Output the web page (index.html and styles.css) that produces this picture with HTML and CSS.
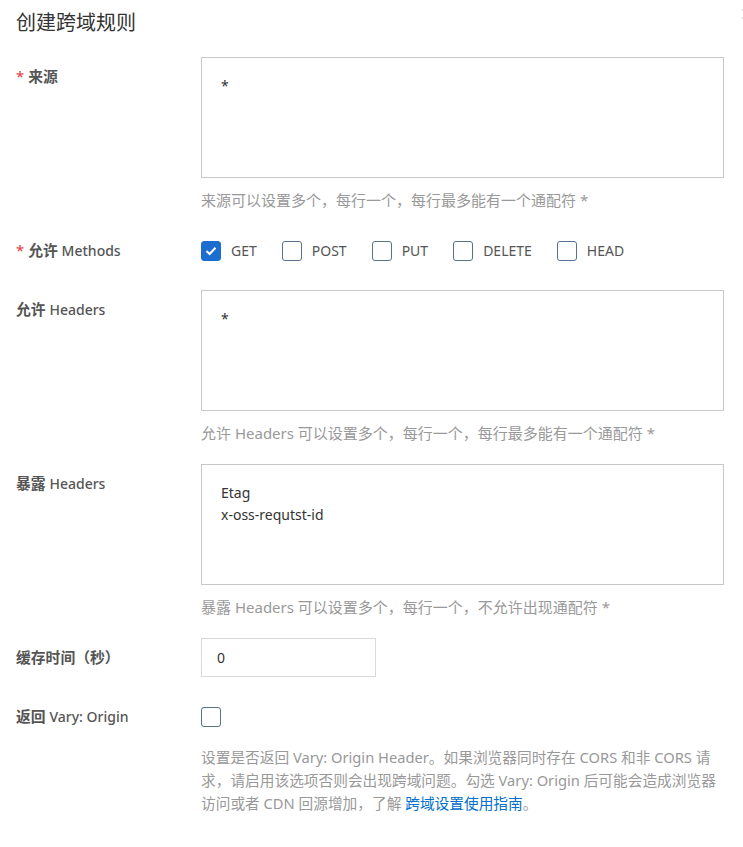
FILE: index.html
```html
<!DOCTYPE html>
<html lang="zh-CN">
<head>
    <meta charset="UTF-8">
    <meta name="viewport" content="width=device-width, initial-scale=1.0">
    <title>创建跨域规则</title>
    <link rel="stylesheet" href="styles.css">
</head>
<body>
    <div class="panel">
        <button class="close" type="button" aria-label="关闭">
            <svg width="10" height="10" viewBox="0 0 10 10"><path d="M0.5 0.5 L9.5 9.5 M9.5 0.5 L0.5 9.5" stroke="#999" stroke-width="1.2" fill="none"/></svg>
        </button>
        <h2 class="title">创建跨域规则</h2>

        <div class="form-item">
            <label class="form-label required">来源</label>
            <div class="form-control">
                <div class="textarea">*</div>
                <div class="help">来源可以设置多个，每行一个，每行最多能有一个通配符 *</div>
            </div>
        </div>

        <div class="form-item">
            <label class="form-label required">允许 <span class="en">Methods</span></label>
            <div class="form-control">
                <div class="check-group">
                    <label class="check"><span class="box checked"><svg width="12" height="10" viewBox="0 0 12 10"><path d="M1.5 5 L4.6 8 L10.5 1.8" stroke="#fff" stroke-width="2" fill="none"/></svg></span>GET</label>
                    <label class="check"><span class="box"></span>POST</label>
                    <label class="check"><span class="box"></span>PUT</label>
                    <label class="check"><span class="box"></span>DELETE</label>
                    <label class="check"><span class="box"></span>HEAD</label>
                </div>
            </div>
        </div>

        <div class="form-item">
            <label class="form-label">允许 <span class="en">Headers</span></label>
            <div class="form-control">
                <div class="textarea">*</div>
                <div class="help">允许 Headers 可以设置多个，每行一个，每行最多能有一个通配符 *</div>
            </div>
        </div>

        <div class="form-item">
            <label class="form-label">暴露 <span class="en">Headers</span></label>
            <div class="form-control">
                <div class="textarea">Etag<br>x-oss-requtst-id</div>
                <div class="help">暴露 Headers 可以设置多个，每行一个，不允许出现通配符 *</div>
            </div>
        </div>

        <div class="form-item">
            <label class="form-label">缓存时间（秒）</label>
            <div class="form-control">
                <div class="input">0</div>
            </div>
        </div>

        <div class="form-item">
            <label class="form-label">返回 <span class="en">Vary: Origin</span></label>
            <div class="form-control">
                <div class="check-group">
                    <label class="check"><span class="box"></span></label>
                </div>
                <p class="help desc">设置是否返回 Vary: Origin Header。如果浏览器同时存在 CORS 和非 CORS 请求，请启用该选项否则会出现跨域问题。勾选 Vary: Origin 后可能会造成浏览器访问或者 CDN 回源增加，了解 <a href="#">跨域设置使用指南</a>。</p>
            </div>
        </div>
    </div>
</body>
</html>
```

FILE: styles.css
```css
body {
    margin: 0;
    background-color: #fff;
    font-family: "Noto Sans", "Noto Sans CJK SC", sans-serif;
    font-size: 14px;
    color: #333;
}

.panel {
    position: relative;
    width: 743px;
    padding: 11px 16px 20px;
    box-sizing: border-box;
    overflow: hidden;
}

.close {
    position: absolute;
    top: 9px;
    right: -9px;
    padding: 0;
    border: none;
    background: none;
    line-height: 0;
}

.title {
    margin: 0 0 22px;
    font-size: 20px;
    line-height: 24px;
    font-weight: normal;
    color: #333;
}

.form-item {
    display: grid;
    grid-template-columns: 185px 523px;
    margin-bottom: 20px;
}

.form-label {
    padding-top: 8px;
    line-height: 22px;
    font-weight: bold;
    font-size: 14.8px;
    color: #555;
}

.form-label .en {
    font-weight: 500;
    font-size: 14px;
}

.form-label.required::before {
    content: "*";
    color: #e0393e;
    margin-right: 4px;
    font-weight: normal;
}

.textarea {
    height: 121px;
    box-sizing: border-box;
    padding: 17px 19px;
    border: 1px solid #c8c8c8;
    line-height: 22px;
    color: #333;
}

.help {
    margin-top: 11px;
    font-size: 15px;
    line-height: 22px;
    color: #999;
}

.help.desc {
    margin: 10px 0 0;
    font-size: 14.7px;
    line-height: 23px;
}

.help a {
    color: #0070cc;
    text-decoration: none;
}

.check-group {
    display: flex;
    align-items: center;
    height: 39px;
}

.check {
    display: flex;
    align-items: center;
    margin-right: 25px;
    color: #555;
}

.box {
    display: flex;
    align-items: center;
    justify-content: center;
    width: 20px;
    height: 20px;
    box-sizing: border-box;
    margin-right: 10px;
    border: 1px solid #56708e;
    border-radius: 3px;
    background-color: #fff;
}

.box.checked {
    border-color: #1b6dd0;
    background-color: #1b6dd0;
}

.input {
    width: 175px;
    height: 39px;
    box-sizing: border-box;
    padding: 0 15px;
    border: 1px solid #d9d9d9;
    line-height: 37px;
    color: #333;
}
```
